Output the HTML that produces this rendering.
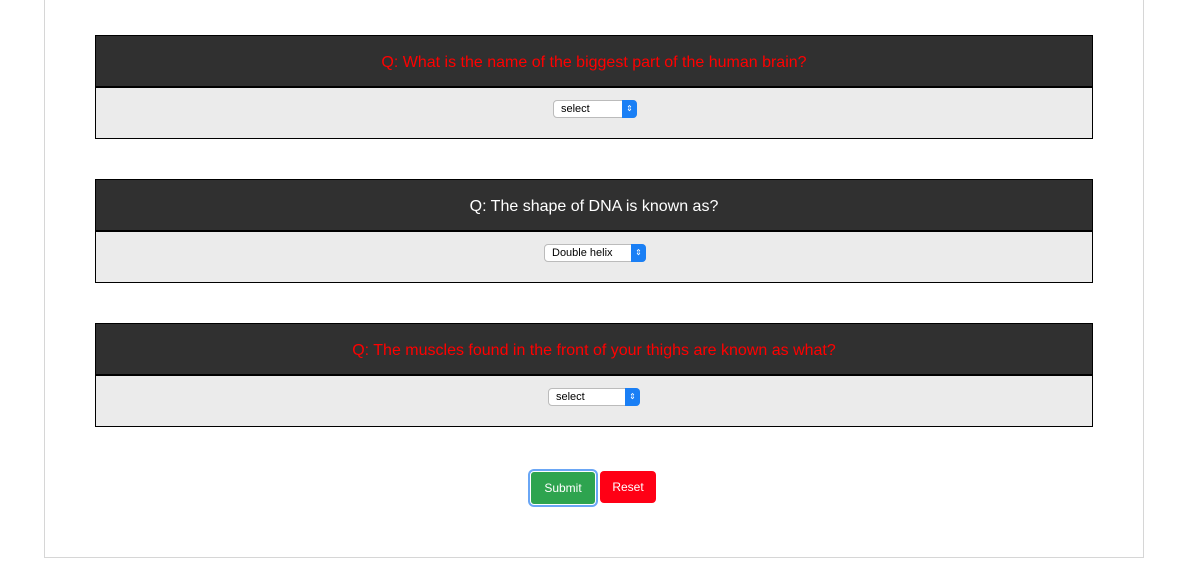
<!DOCTYPE html>
<html><head><style>
body{margin:0;background:#fff;font-family:"Liberation Sans",sans-serif;width:1195px;height:577px;overflow:hidden;position:relative}
.cont{position:absolute;left:44px;top:-2px;width:1098px;height:559px;border:1px solid #d6d6d6;border-top:none}
.p{position:absolute;left:95px;width:996px;border:1px solid #000;}
.h{height:50px;background:#303030;border-bottom:2px solid #000;text-align:center;line-height:54px;font-size:16px;color:#fff}
.h.r{color:#ff0000}
.b{height:50px;background:#ebebeb;position:relative}
.s{position:absolute;top:12px;height:16px;border:1px solid #bbb;border-radius:4px;background:#fff;font-size:11px;line-height:17px;padding-left:7px;box-sizing:content-box;color:#000}
.s i{position:absolute;right:-1px;top:-1px;width:15px;height:18px;background:#1a7ff5;border-radius:0 4px 4px 0;color:#fff;font-style:normal;font-size:8px;text-align:center;line-height:18px}
.btn{position:absolute;top:471px;height:32px;border-radius:4px;color:#fff;font-size:12px;line-height:33px;text-align:center}
</style></head><body>
<div class="cont"></div>
<div class="p" style="top:35px"><div class="h r">Q: What is the name of the biggest part of the human brain?</div><div class="b"><div class="s" style="left:457px;width:75px">select<i>&#8661;</i></div></div></div>
<div class="p" style="top:179px"><div class="h">Q: The shape of DNA is known as?</div><div class="b"><div class="s" style="left:448px;width:93px">Double helix<i>&#8661;</i></div></div></div>
<div class="p" style="top:323px"><div class="h r">Q: The muscles found in the front of your thighs are known as what?</div><div class="b"><div class="s" style="left:452px;width:83px">select<i>&#8661;</i></div></div></div>
<div class="btn" style="left:530px;width:64px;background:#2ea44f;border:1px solid #fff;box-shadow:0 0 0 2px #6aa6f5">Submit</div>
<div class="btn" style="left:600px;width:56px;background:#ff0015">Reset</div>
</body></html>
